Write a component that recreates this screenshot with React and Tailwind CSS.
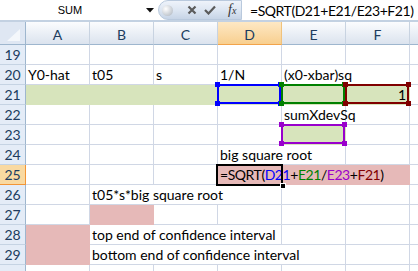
import React from "react";

const COLS = ["A", "B", "C", "D", "E", "F"];

// cell fills as literal class sets
const FILL = {
  none: "border-[#d0d7e5]",
  green: "bg-[#d7e4bc] border-[#d7e4bc]",
  pink: "bg-[#e6b9b8] border-[#e6b9b8]",
};

const REF = {
  blue: { line: "border-[#0000ff]", dot: "bg-[#0000ff]" },
  green: { line: "border-[#008000]", dot: "bg-[#008000]" },
  red: { line: "border-[#800000]", dot: "bg-[#800000]" },
  purple: { line: "border-[#9900cc]", dot: "bg-[#9900cc]" },
};

const ROWS = [
  { n: 19, cells: [{}, {}, {}, {}, {}, {}] },
  {
    n: 20,
    cells: [
      { t: "Y0-hat" },
      { t: "t05" },
      { t: "s" },
      { t: "1/N" },
      { t: "(x0-xbar)sq", open: true },
      {},
    ],
  },
  {
    n: 21,
    cells: [
      { fill: "green" },
      { fill: "green" },
      { fill: "green" },
      { fill: "green", ref: "blue" },
      { fill: "green", ref: "green" },
      { fill: "green", ref: "red", t: "1", right: true },
    ],
  },
  { n: 22, cells: [{}, {}, {}, {}, { t: "sumXdevSq" }, {}] },
  { n: 23, cells: [{}, {}, {}, {}, { fill: "green", ref: "purple" }, {}] },
  { n: 24, cells: [{}, {}, {}, { t: "big square root", open: true }, {}, {}] },
  {
    n: 25,
    sel: true,
    cells: [
      {},
      {},
      {},
      { fill: "pink", active: true, formula: true, open: true },
      { fill: "pink", open: true },
      { fill: "pink" },
    ],
  },
  {
    n: 26,
    cells: [
      {},
      { t: "t05*s*big square root", open: true },
      { open: true },
      {},
      {},
      {},
    ],
  },
  { n: 27, cells: [{}, { fill: "pink" }, {}, {}, {}, {}] },
  {
    n: 28,
    cells: [
      { fill: "pink" },
      { t: "top end of confidence interval", open: true },
      { open: true },
      {},
      {},
      {},
    ],
  },
  {
    n: 29,
    cells: [
      { fill: "pink" },
      { t: "bottom end of confidence interval", open: true },
      { open: true },
      { open: true },
      {},
      {},
    ],
  },
  // only the top few pixels of row 30 are in view
  { n: 30, hideNum: true, cells: [{}, {}, {}, {}, {}, {}] },
];

function RefBox({ color }) {
  const c = REF[color];
  return (
    <div className="absolute -left-px -top-px right-0 bottom-0 z-20 pointer-events-none">
      <div className={`absolute inset-0 border-2 ${c.line}`} />
      <span className={`absolute -left-[2px] -top-[2px] w-[5px] h-[5px] ${c.dot}`} />
      <span className={`absolute -right-[2px] -top-[2px] w-[5px] h-[5px] ${c.dot}`} />
      <span className={`absolute -left-[2px] -bottom-[2px] w-[5px] h-[5px] ${c.dot}`} />
      <span className={`absolute -right-[2px] -bottom-[2px] w-[5px] h-[5px] ${c.dot}`} />
    </div>
  );
}

function ActiveBox() {
  return (
    <div className="absolute -left-[2px] -top-px -right-px -bottom-[2px] z-20 pointer-events-none">
      <div className="absolute inset-0 border-2 border-black" />
      <span className="absolute -right-[3px] -bottom-[3px] w-[6px] h-[6px] bg-black border border-white" />
    </div>
  );
}

function Formula() {
  return (
    <span className="tracking-[-0.45px]">
      =SQRT(<span className="text-[#0000ff]">D21</span>+
      <span className="text-[#008000]">E21</span>/
      <span className="text-[#9900cc]">E23</span>+
      <span className="text-[#800000]">F21</span>)
    </span>
  );
}

function Cell({ c }) {
  const fill = FILL[c.fill || "none"];
  return (
    <div
      className={`relative w-[64px] h-[20px] shrink-0 flex items-end ${
        c.right ? "justify-end pr-[3px]" : "pl-[2px]"
      } ${c.open ? "" : "border-r"} border-b ${fill}`}
    >
      {(c.t || c.formula) && (
        <span className="relative z-10 whitespace-nowrap leading-[17px] pb-px">
          {c.formula ? <Formula /> : c.t}
        </span>
      )}
      {c.ref && <RefBox color={c.ref} />}
      {c.active && <ActiveBox />}
    </div>
  );
}

function FormulaBar() {
  return (
    <div className="flex h-[20px] bg-white">
      <div className="w-[158px] flex items-center shrink-0 bg-white">
        <span className="w-[140px] text-center font-['Liberation_Sans',sans-serif] text-[11px] text-black">
          SUM
        </span>
        <svg width="8" height="5" viewBox="0 0 8 5" className="ml-[6px]">
          <path d="M0 0 H8 L4 4.5 Z" fill="#111" />
        </svg>
      </div>
      <div className="w-[84px] shrink-0 flex items-center rounded-l-full bg-linear-to-b from-[#eef3fa] via-[#dde6f2] to-[#c6d4e6] border border-[#b9c9dd]">
        <span className="ml-[3px] w-[11px] h-[11px] rounded-full bg-radial-[at_35%_35%] from-white to-[#a9b1bb]" />
        <svg width="10" height="10" viewBox="0 0 10 10" className="ml-[14px]">
          <path d="M1.5 1.5 L8.5 8.5 M8.5 1.5 L1.5 8.5" stroke="#5b5b5b" strokeWidth="2.2" />
        </svg>
        <svg width="12" height="10" viewBox="0 0 12 10" className="ml-[7px]">
          <path d="M1 5 L4.5 8.5 L11 1.5" stroke="#5b5b5b" strokeWidth="2.2" fill="none" />
        </svg>
        <span className="ml-[12px] font-['Liberation_Serif',serif] italic text-[14px] leading-none text-[#333]">
          f<span className="text-[10px]">x</span>
        </span>
      </div>
      <div className="flex-1 flex items-end pl-[8px] pb-[1px] bg-white">
        <span className="leading-[17px] text-black whitespace-nowrap tracking-[-0.45px]">
          =SQRT(D21+E21/E23+F21)
        </span>
      </div>
    </div>
  );
}

function HeaderRow() {
  return (
    <div className="flex h-[23px]">
      <div className="relative w-[26px] shrink-0 border-r border-b border-[#9eb6ce] bg-[#dfe7f3]">
        <svg width="26" height="23" viewBox="0 0 26 23" className="absolute inset-0">
          <path d="M20 7 L20 19 L7 19 Z" fill="#f4f7fb" />
        </svg>
      </div>
      {COLS.map((col) => (
        <div
          key={col}
          className={`w-[64px] shrink-0 flex items-end justify-center pb-px border-r border-b ${
            col === "D"
              ? "bg-linear-to-b from-[#fde8c4] to-[#f8cf8f] border-r-[#f0c27c] border-b-[#f2a34a]"
              : "bg-linear-to-b from-[#fbfcfe] to-[#dbe3ee] border-r-[#c8d3e1] border-b-[#9eb6ce]"
          }`}
        >
          <span className="leading-[17px] text-[#203c5e]">{col}</span>
        </div>
      ))}
      <div className="flex-1 bg-linear-to-b from-[#fbfcfe] to-[#dbe3ee] border-b border-[#9eb6ce]" />
    </div>
  );
}

function Row({ r }) {
  return (
    <div className="flex h-[20px]">
      <div
        className={`w-[26px] shrink-0 flex items-end justify-center pb-px border-r border-b ${
          r.sel
            ? "bg-[#f9d9a1] border-[#f29536]"
            : "bg-[#e4ecf7] border-r-[#9eb6ce] border-b-[#c5d3e3]"
        }`}
      >
        {!r.hideNum && <span className="leading-[17px] text-[#203c5e]">{r.n}</span>}
      </div>
      {r.cells.map((c, i) => (
        <Cell key={i} c={c} />
      ))}
      <div className="flex-1 border-b border-[#d0d7e5]" />
    </div>
  );
}

export default function App() {
  return (
    <div className="w-[418px] h-[271px] overflow-hidden bg-white text-black text-[14px] font-[Lato,'Liberation_Sans',sans-serif]">
      <FormulaBar />
      <div className="h-[2px] bg-[#c3d1e2]" />
      <HeaderRow />
      {ROWS.map((r) => (
        <Row key={r.n} r={r} />
      ))}
    </div>
  );
}
